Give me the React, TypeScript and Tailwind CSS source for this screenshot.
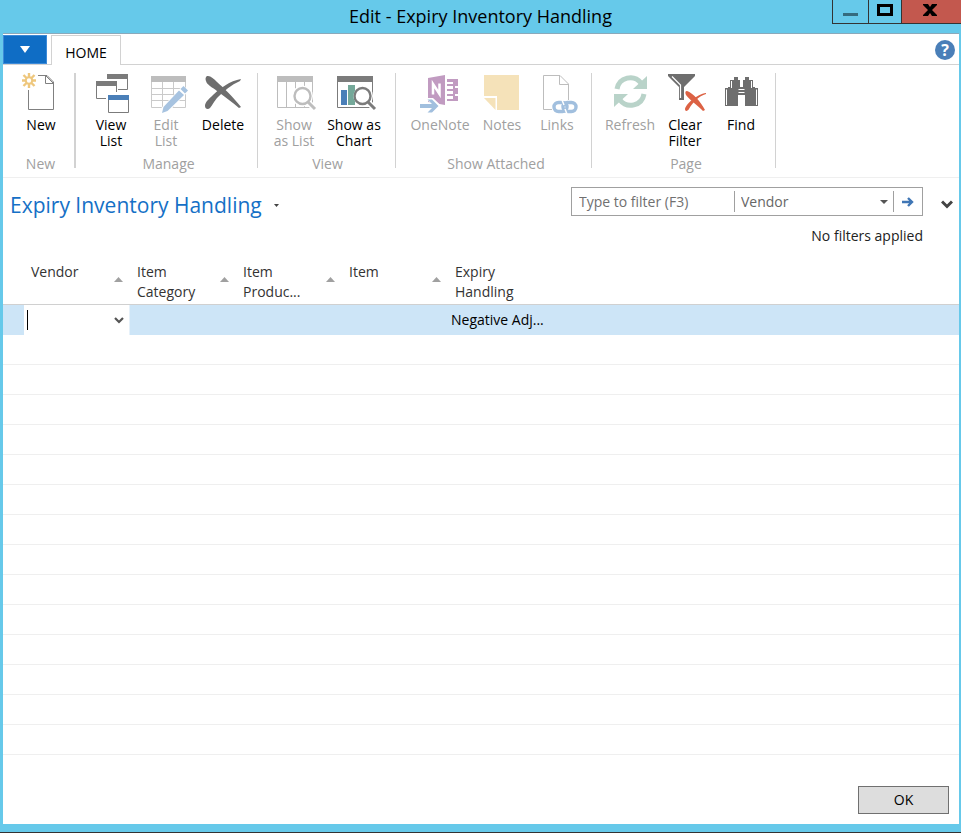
import React from 'react';

interface CommandProps {
    label:string,
    width:string,
    disabled?:boolean,
    children:React.ReactNode
}

interface GroupProps {
    title:string,
    className:string,
    children:React.ReactNode
}

const columns = ['Vendor', 'Item Category', 'Item Produc...', 'Item', 'Expiry Handling'];
const emptyRows = Array.from({ length: 14 }, (_, i) => i);

const Command:React.FC<CommandProps> = ({ label, width, disabled, children }) => (
    <button
        type="button"
        disabled={disabled}
        className={`${width} flex flex-col items-center text-sm leading-4 ${disabled ? 'text-[#a0a0a0]' : 'text-black'}`}
    >
        <svg className="mb-1 h-10 w-10 overflow-visible" viewBox="0 0 40 40" fill="none">{children}</svg>
        <span className="whitespace-pre-line">{label}</span>
    </button>
)

const Group:React.FC<GroupProps> = ({ title, className, children }) => (
    <section className={`${className} flex h-[95px] shrink-0 flex-col justify-between border-[#d2d2d2]`}>
        <div className="flex items-start">{children}</div>
        <h2 className="-mb-1 -ml-1 text-center text-sm leading-4 text-[#a0a0a0]">{title}</h2>
    </section>
)

const NewIcon = () => (
    <>
        <path d="M17 2.5H26L32.5 9V36.5H7.5V17" stroke="#808080" />
        <path d="M24.5 2.5V10.5H32.5M25 3L32 10" stroke="#808080" />
        <path d="M8 0V15M1 7.5H15M2.5 2L13.5 13M13.5 2L2.5 13" stroke="#eec77d" strokeWidth="2.4" />
        <circle cx="8" cy="7.5" r="3.2" fill="#fff" stroke="#eec77d" strokeWidth="2" />
    </>
)

const ViewListIcon = () => (
    <>
        <path d="M16.5 5V1.5H36.5V16.5H27" stroke="#7b7b7b" />
        <path d="M16 1H37V6H16Z" fill="#7b7b7b" />
        <path d="M15 25.5H5.5V8.5H25.5V19" stroke="#7b7b7b" />
        <path d="M4 7H27V13H4Z" fill="#fff" />
        <path d="M5 8H26V13H5Z" fill="#7b7b7b" />
        <path d="M16 21H39V40H16Z" fill="#fff" />
        <path d="M17.5 22.5H37.5V39.5H17.5Z" stroke="#7b7b7b" />
        <path d="M17 22H38V27H17Z" fill="#4a7fb8" />
    </>
)

const EditListIcon = () => (
    <>
        <path d="M5.5 9V34.5H39.5V9M5 15.5H40M5 21.5H40M5 27.5H40M16.5 9V34M27.5 9V34" stroke="#cacaca" />
        <path d="M5 3H40V9H5Z" fill="#bdbdbd" />
        <path d="M17 39L40 15" stroke="#fff" strokeWidth="8" />
        <path d="M16 40L17.5 34L33 17.5L38 22L21.5 38Z" fill="#a7c3e0" />
        <path d="M34.5 16L37.5 13L42 17.5L39 20.5Z" fill="#a7c3e0" />
    </>
)

const DeleteIcon = () => (
    <>
        <path d="M5 3C8 3 11 6 14 9C21 15 30 24 38 34L36 35C29 29 21 23 14 18C9 14 4 12 3 8C2 5 3 3 5 3Z" fill="#6e6e6e" />
        <path d="M2 33C2 29 6 26 10 22C17 15 27 8 38 6L37 8C28 12 21 18 15 24C11 28 9 33 7 35C5 37 2 36 2 33Z" fill="#6e6e6e" />
    </>
)

const Lens:React.FC<{ color:string }> = ({ color }) => (
    <>
        <path d="M34 29L41 36" stroke="#fff" strokeWidth="6" />
        <circle cx="28.5" cy="23" r="8" fill="#fff" stroke="#fff" strokeWidth="5" />
        <circle cx="28.5" cy="23" r="8" fill="#fff" stroke={color} strokeWidth="2.4" />
        <path d="M34 29L41 36" stroke={color} strokeWidth="3" />
    </>
)

const ShowListIcon = () => (
    <>
        <path d="M3.5 3.5H38.5V34.5H3.5ZM12.5 9V34M21.5 9V34M30.5 9V34" stroke="#bdbdbd" />
        <path d="M3 3H39V9H3Z" fill="#bdbdbd" />
        <Lens color="#bdbdbd" />
    </>
)

const ShowChartIcon = () => (
    <>
        <path d="M3.5 3.5H38.5V34.5H3.5Z" stroke="#7b7b7b" />
        <path d="M3 3H39V9H3Z" fill="#7b7b7b" />
        <path d="M7 17H13V32H7Z" fill="#4a7fb8" />
        <Lens color="#7b7b7b" />
        <path d="M14 12H21V18C19 21 19 26 21 28V32H14Z" fill="#74a899" />
    </>
)

const OneNoteIcon = () => (
    <>
        <path d="M8 5L25 2V32L8 29Z" fill="#c19bc1" />
        <path d="M27 6H38V13H35V15H38V21H35V23H38V28H27V26H33V23H27V21H33V18H27V16H33V13H27V11H33V9H27Z" fill="#c19bc1" />
        <path d="M13 21.500V11L19.500 21V10.500" stroke="#fff" strokeWidth="2.5" />
        <path d="M0 30H10L6 25H13L21 32.5L13 40H6L10 35H0Z" fill="#fff" />
        <path d="M0 31H12L7.5 26.5H12L18.5 33L12 39.5H7.5L12 35H0Z" fill="#a1bfde" />
    </>
)

const NotesIcon = () => (
    <>
        <path d="M2 2H37V37H15V23H2Z" fill="#f5e2b9" />
        <path d="M2 25L13.5 37V25Z" fill="#f5e2b9" />
    </>
)

const LinksIcon = () => (
    <>
        <path d="M15 36.5H6.5V2.5H23L31.5 11V27" stroke="#bdbdbd" />
        <path d="M22.5 2.5V11.5H31.5" stroke="#bdbdbd" />
        <rect x="17" y="29.5" width="13" height="9" rx="4.5" stroke="#a1bfde" strokeWidth="3.4" />
        <rect x="26" y="29.5" width="13" height="9" rx="4.5" stroke="#a1bfde" strokeWidth="3.4" />
        <path d="M25 27L27 32M28 36L30 41" stroke="#fff" strokeWidth="1.5" />
    </>
)

const RefreshIcon = () => (
    <>
        <path d="M7 16C9 4 24 1 31 10" stroke="#b9d3c9" strokeWidth="5" />
        <path d="M37 3V16H23Z" fill="#b9d3c9" />
        <path d="M34 21C32 33 17 36 10 27" stroke="#b9d3c9" strokeWidth="5" />
        <path d="M4 34V21H18Z" fill="#b9d3c9" />
    </>
)

const ClearFilterIcon = () => (
    <>
        <path d="M3 1H30V3L19 14V27H14V14L3 3Z" fill="#6e6e6e" />
        <path d="M7 3.5L15.5 12V25" stroke="#fff" strokeWidth="1.2" />
        <path d="M22 18C28 20 36 29 40 37L38 38C33 33 25 27 21 22C20 20 20 18 22 18Z" fill="#dc6244" />
        <path d="M20 36C21 31 32 21 41 20V21C34 23 27 30 24 36C23 38 20 39 20 36Z" fill="#dc6244" />
    </>
)

const FindIcon = () => (
    <>
        <path d="M13 4H17V7H19V14H22V7H24V4H28V7H32V14H34V15H37V33H24V22H17V33H4V15H7V14H9V7H13Z" fill="#6e6e6e" />
        <path d="M10.5 8V15M30.5 8V15M5.5 16.500V32M35.5 16.500V32M17.500 16.500H23.500M17.500 19.500H23.500" stroke="#fff" />
    </>
)

const Ribbon = () => (
    <div className="flex border-b border-[#efefef] pt-2 pb-[9px]">
        <Group title="New" className="w-[73px] border-r-2 pl-2">
            <Command label="New" width="w-[60px]"><NewIcon /></Command>
        </Group>
        <Group title="Manage" className="w-[182px] border-r pl-2">
            <Command label={'View\nList'} width="w-[54px]"><ViewListIcon /></Command>
            <Command label={'Edit\nList'} width="w-[56px]" disabled><EditListIcon /></Command>
            <Command label="Delete" width="w-[58px]"><DeleteIcon /></Command>
        </Group>
        <Group title="View" className="w-[138px] border-r pl-[6px]">
            <Command label={'Show\nas List'} width="w-[60px]" disabled><ShowListIcon /></Command>
            <Command label={'Show as\nChart'} width="w-[60px]"><ShowChartIcon /></Command>
        </Group>
        <Group title="Show Attached" className="w-[196px] border-r pl-[9px]">
            <Command label="OneNote" width="w-[70px]" disabled><OneNoteIcon /></Command>
            <Command label="Notes" width="w-[54px]" disabled><NotesIcon /></Command>
            <Command label="Links" width="w-[56px]" disabled><LinksIcon /></Command>
        </Group>
        <Group title="Page" className="w-[184px] border-r pl-[9px]">
            <Command label="Refresh" width="w-[58px]" disabled><RefreshIcon /></Command>
            <Command label={'Clear\nFilter'} width="w-[52px]"><ClearFilterIcon /></Command>
            <Command label="Find" width="w-[60px]"><FindIcon /></Command>
        </Group>
    </div>
)

const TitleBar = () => (
    <header className="grid h-[33px] grid-cols-[1fr_auto_1fr] items-start">
        <h1 className="col-start-2 text-lg leading-8 text-black">Edit - Expiry Inventory Handling</h1>
        <div className="flex h-6 justify-end">
            <button type="button" aria-label="Minimize" className="flex w-9 justify-center border-b border-l border-[#333] pt-[13px]">
                <span className="h-[3px] w-[15px] bg-[#356b7e]" />
            </button>
            <button type="button" aria-label="Maximize" className="flex w-[33px] justify-center border-b border-l border-[#333] pt-1">
                <span className="h-3 w-4 border-3 border-black" />
            </button>
            <button type="button" aria-label="Close" className="flex w-[60px] justify-center border-b border-l border-[#333] bg-[#c3584e] pt-1">
                <svg className="mr-1 h-3 w-[14px]" viewBox="0 0 14 12"><path d="M0 0H5L7 3L9 0H14V1L9 6L14 11V12H9L7 9L5 12H0V11L5 6L0 1Z" fill="#000" /></svg>
            </button>
        </div>
    </header>
)

const FilterBar = () => (
    <div className="flex items-start justify-between pt-[9px] pl-[7px]">
        <button type="button" className="flex items-center gap-3 text-[21px] leading-9 text-[#1570c6]">
            Expiry Inventory Handling
            <svg className="h-[3px] w-[5px]" viewBox="0 0 5 3"><path d="M0 0H5L2.5 3Z" fill="#444" /></svg>
        </button>
        <div className="flex items-start">
            <div>
                <form className="flex h-[29px] w-[352px] items-center border border-[#a0a0a0] text-sm text-[#666]">
                    <input
                        type="text"
                        aria-label="Filter"
                        placeholder="Type to filter (F3)"
                        className="w-[162px] pl-[7px] outline-none placeholder:text-[#707070]"
                    />
                    <div className="relative h-[21px] w-[160px] border-x border-[#a0a0a0]">
                        <select aria-label="Filter column" className="h-full w-full appearance-none pl-[6px] outline-none">
                            {columns.map(column => <option key={column}>{column}</option>)}
                        </select>
                        <svg className="pointer-events-none absolute top-[9px] right-[5px] h-1 w-2" viewBox="0 0 8 4"><path d="M0 0H8L4 4Z" fill="#555" /></svg>
                    </div>
                    <button type="button" aria-label="Apply filter" className="flex flex-1 justify-center">
                        <svg className="h-[10px] w-3" viewBox="0 0 12 10" fill="none"><path d="M0 5H10M6 1L10 5L6 9" stroke="#3f76b5" strokeWidth="2.4" /></svg>
                    </button>
                </form>
                <p className="mt-[10px] text-right text-sm leading-5 text-[#222]">No filters applied</p>
            </div>
            <button type="button" aria-label="Expand filters" className="mr-[6px] ml-[18px] pt-[13px]">
                <svg className="h-[9px] w-3" viewBox="0 0 12 9" fill="none"><path d="M1 1.5L6 6.5L11 1.5" stroke="#444" strokeWidth="3" /></svg>
            </button>
        </div>
    </div>
)

const Grid = () => (
    <table className="mt-[11px] w-full table-fixed border-separate border-spacing-0 text-left text-sm">
        <thead>
            <tr className="h-[48px] align-top text-[#333]">
                <th className="w-[21px] border-b border-[#d0d0d0]" aria-label="Row marker"></th>
                {columns.map((column, i) => (
                    <th key={column} className="w-[106px] border-b border-[#d0d0d0] pt-[5px] pl-[7px] font-normal leading-5">
                        <div className="flex justify-between">
                            <span className="w-[68px]">{column}</span>
                            {i < 4 && (
                                <svg className="mt-[15px] mr-[7px] h-[5px] w-[9px]" viewBox="0 0 9 5"><path d="M0 5H9L4.5 0Z" fill="#a0a0a0" /></svg>
                            )}
                        </div>
                    </th>
                ))}
                <th className="border-b border-[#d0d0d0]" aria-label="Empty column"></th>
            </tr>
        </thead>
        <tbody>
            <tr className="h-[30px] bg-[#cde5f7] text-black">
                <td></td>
                <td className="border-r border-[#e6f1fa] bg-white p-0">
                    <div className="flex items-center pl-[3px] pr-[5px]">
                        <span className="h-5 w-px bg-black" />
                        <input type="text" aria-label="Vendor" className="min-w-0 flex-1 outline-none" />
                        <button type="button" aria-label="Choose vendor">
                            <svg className="h-[7px] w-[10px]" viewBox="0 0 10 7" fill="none"><path d="M1 1L5 5L9 1" stroke="#555" strokeWidth="2.2" /></svg>
                        </button>
                    </div>
                </td>
                <td></td>
                <td></td>
                <td></td>
                <td className="p-0 pl-[3px] whitespace-nowrap">Negative Adj...</td>
                <td></td>
            </tr>
            {emptyRows.map(row => (
                <tr key={row} className="h-[30px]">
                    <td colSpan={7} className="border-b border-[#efefef] p-0"></td>
                </tr>
            ))}
        </tbody>
    </table>
)

const App:React.FC = () => {
    return (
        <div className="flex min-h-screen w-full flex-col border-b border-[#333] bg-[#66c9ea] font-['Open_Sans','Noto_Sans',sans-serif]">
            <TitleBar />
            <main className="mr-[2px] mb-2 ml-[3px] flex flex-1 flex-col border-t border-[#8aa9bb] bg-white">
                <nav className="flex h-[31px] items-end">
                    <div className="flex h-full w-12 border-b border-[#d2d2d2] pt-px">
                        <button type="button" aria-label="Application menu" className="flex h-[29px] w-11 items-center justify-center border border-[#3c8ad8] bg-[#0f6dc5]">
                            <svg className="h-[7px] w-[10px]" viewBox="0 0 10 7"><path d="M0 0H10L5 7Z" fill="#fff" /></svg>
                        </button>
                    </div>
                    <button type="button" className="h-[30px] w-[70px] border-x border-t border-[#d2d2d2] pt-1 text-sm text-black">HOME</button>
                    <div className="flex h-full flex-1 items-center justify-end border-b border-[#d2d2d2] pt-px pr-1">
                        <button type="button" aria-label="Help" className="flex h-5 w-5 items-center justify-center rounded-full bg-[#4a7fb8] text-base font-bold leading-5 text-white">?</button>
                    </div>
                </nav>
                <Ribbon />
                <FilterBar />
                <Grid />
                <footer className="mt-auto flex justify-end pr-[10px] pb-[10px]">
                    <button type="button" className="h-7 w-[91px] border border-[#707070] bg-[#dddddd] text-sm text-black">OK</button>
                </footer>
            </main>
        </div>
    )
}
export default App
